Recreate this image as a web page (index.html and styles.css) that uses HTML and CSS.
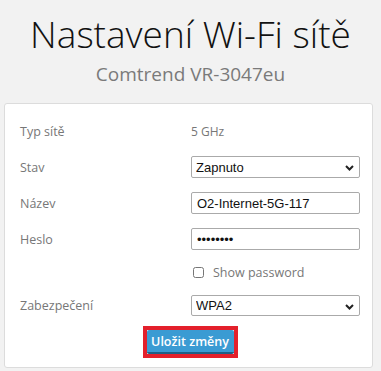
FILE: index.html
```html
<!DOCTYPE html>
<html>
<head>
  <title>Nastavení Wi-Fi sítě</title>
  <link rel="stylesheet" href="styles.css">
</head>
<body>

  <div class="header">
    <h1>Nastavení Wi-Fi sítě</h1>
    <div class="subtitle">Comtrend VR-3047eu</div>
  </div>

  <div class="card">
    <form class="wifi-form">
      <div class="row">
        <label class="lbl">Typ sítě</label>
        <div class="val text-val">5 GHz</div>
      </div>

      <div class="row">
        <label class="lbl">Stav</label>
        <div class="val select-wrap">
          <select class="field">
            <option>Zapnuto</option>
            <option>Vypnuto</option>
          </select>
          <svg class="chevron" width="9" height="6" viewBox="0 0 9 6"><path d="M1 1 L4.5 4.5 L8 1" fill="none" stroke="#222" stroke-width="2"/></svg>
        </div>
      </div>

      <div class="row">
        <label class="lbl">Název</label>
        <div class="val">
          <input class="field" type="text" value="O2-Internet-5G-117">
        </div>
      </div>

      <div class="row">
        <label class="lbl">Heslo</label>
        <div class="val">
          <input class="field" type="password" value="heslo123">
        </div>
      </div>

      <div class="row check-line">
        <div class="lbl"></div>
        <div class="val check-row">
          <input type="checkbox" id="show">
          <label for="show">Show password</label>
        </div>
      </div>

      <div class="row sec-line">
        <label class="lbl">Zabezpečení</label>
        <div class="val select-wrap">
          <select class="field">
            <option>WPA2</option>
            <option>WPA</option>
          </select>
          <svg class="chevron" width="9" height="6" viewBox="0 0 9 6"><path d="M1 1 L4.5 4.5 L8 1" fill="none" stroke="#222" stroke-width="2"/></svg>
        </div>
      </div>
    </form>

    <div class="actions">
      <div class="highlight">
        <button type="button" class="save">Uložit změny</button>
      </div>
    </div>
  </div>

</body>
</html>
```

FILE: styles.css
```css
body {
  margin: 0;
  background-color: #f2f2f2;
  font-family: "Open Sans", sans-serif;
}

.header {
  text-align: center;
  padding-top: 10px;
  height: 94px;
  box-sizing: border-box;
}

h1 {
  margin: 0;
  font-size: 37px;
  font-weight: 300;
  line-height: 48px;
  color: #111;
}

.subtitle {
  margin-top: 4px;
  font-size: 19px;
  line-height: 24px;
  color: #7a7a7a;
}

.card {
  margin: 9px 8px 0 4px;
  height: 265px;
  box-sizing: border-box;
  background-color: #fff;
  border: 1px solid #dcdcdc;
  border-radius: 3px;
  padding: 16px 12px 0 15px;
}

.row {
  display: flex;
  height: 22px;
  margin-bottom: 14px;
}

.check-line {
  height: 20px;
  margin-top: -2px;
  margin-bottom: 13px;
}

.sec-line {
  height: 21px;
  margin-bottom: 0;
}

.lbl {
  width: 171px;
  font-size: 12.5px;
  color: #777;
  display: flex;
  align-items: center;
}

.val {
  display: flex;
  align-items: center;
}

.text-val {
  font-size: 12px;
  color: #777;
}

.field {
  width: 169px;
  height: 22px;
  box-sizing: border-box;
  border: 1px solid #aaa;
  border-radius: 2px;
  padding: 0 5px;
  font-family: "Liberation Sans", Arial, sans-serif;
  font-size: 13px;
  color: #111;
  background-color: #fff;
}

.sec-line .field {
  height: 21px;
}

select.field {
  appearance: none;
  -webkit-appearance: none;
  padding-left: 4px;
}

.select-wrap {
  position: relative;
}

.chevron {
  position: absolute;
  left: 154px;
  top: 9px;
  pointer-events: none;
}

.check-row {
  gap: 9px;
  padding-left: 2px;
}

.check-row input {
  margin: 0;
  width: 11px;
  height: 11px;
}

.check-row label {
  font-size: 12.5px;
  color: #777;
}

.actions {
  display: flex;
  justify-content: center;
  margin-top: 10px;
}

.highlight {
  border: 4px solid #e3202b;
}

.save {
  display: block;
  width: 87px;
  height: 24px;
  border: none;
  border-bottom: 2px solid #1e5f86;
  border-radius: 2px;
  background-color: #3a9bd3;
  color: #fff;
  font-family: "Open Sans", sans-serif;
  font-size: 12.5px;
  font-weight: 600;
  padding: 0;
}
```
